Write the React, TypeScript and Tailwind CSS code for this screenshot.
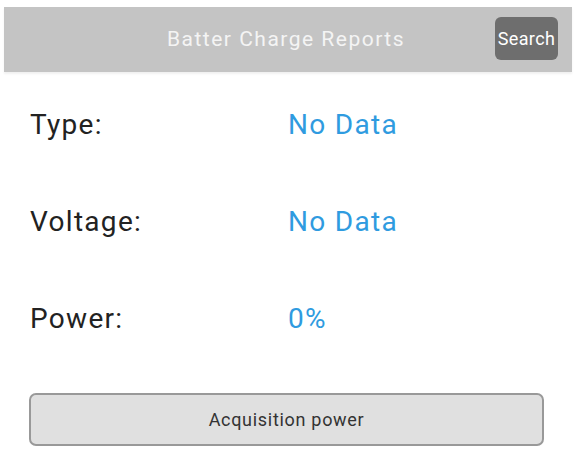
export default function App() {
  const rows = [
    { label: 'Type:', value: 'No Data' },
    { label: 'Voltage:', value: 'No Data' },
    { label: 'Power:', value: '0%' },
  ];

  return (
    <div className="w-[579px] h-[462px] bg-white overflow-hidden font-['Roboto',sans-serif]">
      {/* Title bar */}
      <div className="ml-[4px] mr-[7px] mt-[7px] h-[65px] bg-[#c4c4c4] shadow-[0_2px_2px_rgba(0,0,0,0.06)] relative flex items-center justify-center">
        <span className="text-[21px] text-[#f4f4f4] tracking-[1.5px] pr-[4px]">Batter Charge Reports</span>
        <button className="absolute right-[14px] top-[10px] w-[63px] h-[43px] rounded-[6px] bg-[#6e6e6e] text-white text-[18px] tracking-[0.4px] leading-none flex items-center justify-center">
          Search
        </button>
      </div>

      {/* Info rows */}
      <div className="flex flex-col mt-[4px]">
        {rows.map((r) => (
          <div key={r.label} className="h-[97px] flex items-center pl-[30px]">
            <span className="w-[258px] text-[28px] tracking-[1.3px] text-[#222]">{r.label}</span>
            <span className="text-[28px] tracking-[1.3px] text-[#2f9be0]">{r.value}</span>
          </div>
        ))}
      </div>

      {/* Action button */}
      <div className="pl-[29px] pt-[26px]">
        <button className="w-[515px] h-[53px] rounded-[7px] border-2 border-[#999] bg-[#e0e0e0] text-[18px] tracking-[0.7px] text-[#333]">
          Acquisition power
        </button>
      </div>
    </div>
  );
}
